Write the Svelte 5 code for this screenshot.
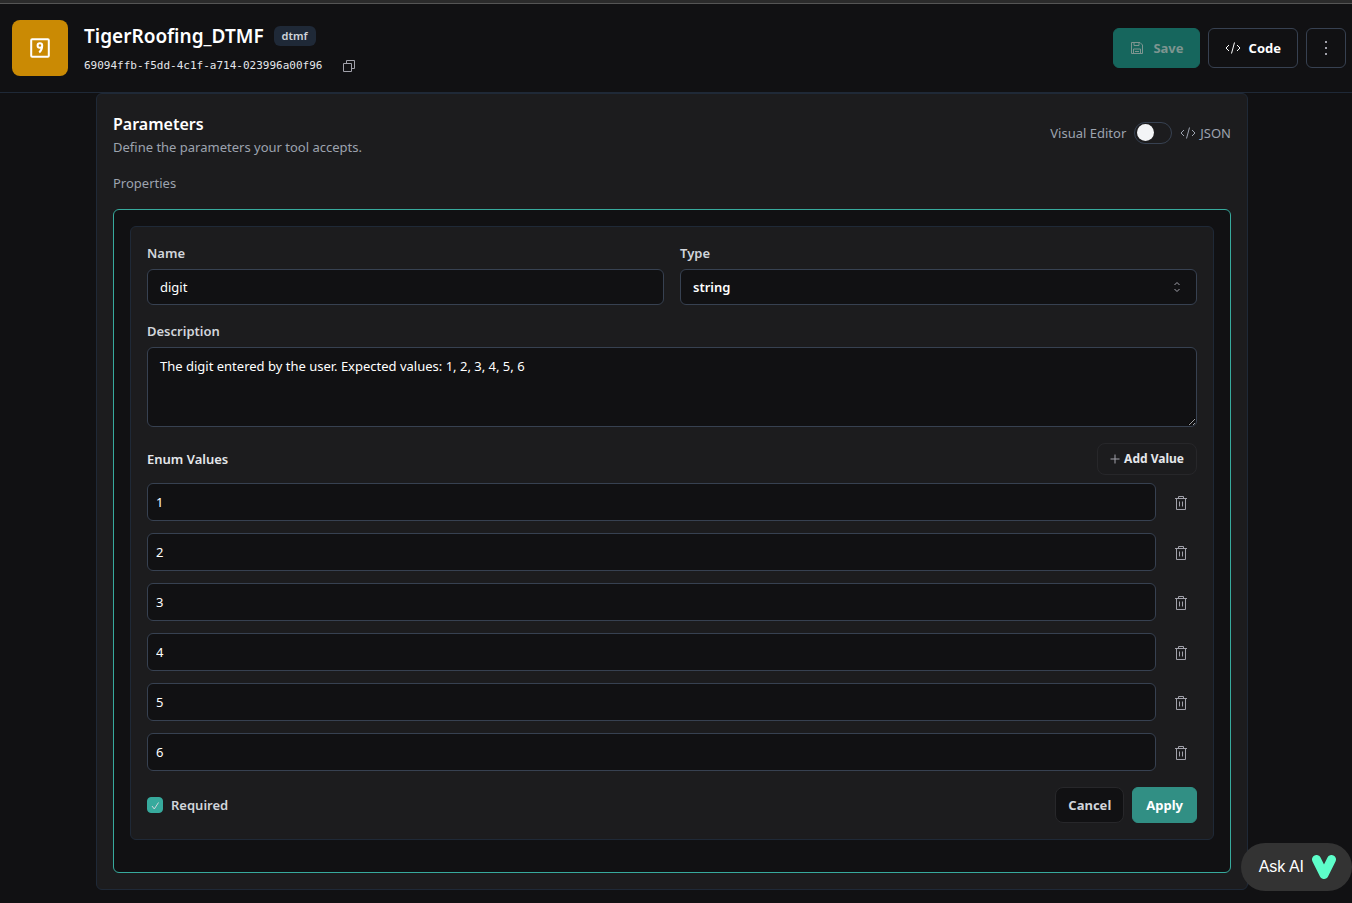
<script lang="ts">
  /** ToolEditor: header bar plus the parameter schema editor for a single tool. */

  let jsonMode = $state(false);
  let name = $state('digit');
  let type = $state('string');
  let description = $state('The digit entered by the user. Expected values: 1, 2, 3, 4, 5, 6');
  let values = $state(['1', '2', '3', '4', '5', '6']);
  let required = $state(true);

  function addValue() { values.push(''); }
  function removeValue(i: number) { values.splice(i, 1); }
</script>

{#snippet codeIcon()}
  <svg class="icon" viewBox="0 0 16 16" aria-hidden="true">
    <path d="M4 5 1 8l3 3M12 5l3 3-3 3M9.500 2.500l-3 11" />
  </svg>
{/snippet}

<div class="page">
  <header class="topbar">
    <div class="tool-icon">
      <svg viewBox="0 0 20 20" aria-hidden="true">
        <rect x="1.200" y="1.200" width="17.600" height="17.600" rx="1" />
        <path d="M12.200 7.500a2.300 2.300 0 1 1-4.600 0 2.300 2.300 0 0 1 4.600 0c0 3-.7 5-3 7" />
      </svg>
    </div>
    <div class="tool-info">
      <div class="title-row">
        <h1>TigerRoofing_DTMF</h1>
        <span class="badge">dtmf</span>
      </div>
      <div class="id-row">
        <span class="tool-id">69094ffb-f5dd-4c1f-a714-023996a00f96</span>
        <button class="copy" aria-label="Copy ID">
          <svg viewBox="0 0 12 12" aria-hidden="true">
            <path d="M3.500 3.500v-3h8v8h-3M.5 3.500h8v8h-8z" />
          </svg>
        </button>
      </div>
    </div>
    <div class="actions">
      <button class="btn save" disabled>
        <svg class="icon" viewBox="0 0 16 16" aria-hidden="true">
          <path d="M2.500 2.500h8.500l2.500 2.500v8.500h-11zM5 2.500v3h5v-3M4.500 13.500V9h7v4.500M6 11.500h4" />
        </svg>
        Save
      </button>
      <button class="btn outline">{@render codeIcon()} Code</button>
      <button class="btn outline more" aria-label="More actions">
        <svg viewBox="0 0 2 16" aria-hidden="true">
          <path d="M0 1h2v2H0zM0 7h2v2H0zM0 13h2v2H0z" />
        </svg>
      </button>
    </div>
  </header>

  <main>
    <section class="card">
      <div class="card-head">
        <div>
          <h2>Parameters</h2>
          <p>Define the parameters your tool accepts.</p>
        </div>
        <label class="mode">
          Visual Editor
          <input type="checkbox" role="switch" bind:checked={jsonMode} />
          <span class="mode-json">{@render codeIcon()} JSON</span>
        </label>
      </div>

      <p class="properties">Properties</p>

      <div class="selected">
        <form class="property" onsubmit={(e) => e.preventDefault()}>
          <div class="columns">
            <div class="field">
              <label for="prop-name">Name</label>
              <input id="prop-name" type="text" bind:value={name} />
            </div>
            <div class="field">
              <label for="prop-type">Type</label>
              <div class="select">
                <select id="prop-type" bind:value={type}>
                  <option>string</option>
                  <option>number</option>
                  <option>boolean</option>
                </select>
                <svg viewBox="0 0 8 12" aria-hidden="true">
                  <path d="M1.500 4 4 1.500 6.500 4M1.500 8 4 10.500 6.500 8" />
                </svg>
              </div>
            </div>
          </div>

          <div class="field">
            <label for="prop-desc">Description</label>
            <textarea id="prop-desc" class="description" bind:value={description}></textarea>
          </div>

          <div class="enum">
            <div class="enum-head">
              <h3>Enum Values</h3>
              <button type="button" class="add" onclick={addValue}>
                <svg viewBox="0 0 10 10" aria-hidden="true"><path d="M5 .5v9M.5 5h9" /></svg>
                Add Value
              </button>
            </div>
            {#each values as _, i}
              <div class="enum-row">
                <input type="text" aria-label={`Enum value ${i + 1}`} bind:value={values[i]} />
                <button type="button" class="trash" aria-label="Remove value" onclick={() => removeValue(i)}>
                  <svg viewBox="0 0 12 14" aria-hidden="true">
                    <path d="M0 2.500h12M3.500 2.500v-2h5v2M1.500 2.500v11h9v-11M4.500 5.500v5M7.500 5.500v5" />
                  </svg>
                </button>
              </div>
            {/each}
          </div>

          <div class="footer">
            <label class="required">
              <input type="checkbox" bind:checked={required} />
              <svg viewBox="0 0 16 16" aria-hidden="true"><path d="m5 9 2.300 3L11.500 5.500" /></svg>
              Required
            </label>
            <div class="footer-actions">
              <button type="button" class="cancel">Cancel</button>
              <button type="submit" class="apply">Apply</button>
            </div>
          </div>
        </form>
      </div>
    </section>
  </main>

  <button class="ask">
    Ask AI
    <svg viewBox="0 0 24 24" aria-hidden="true"><path d="M4.500 4.500 12 19.500l7.500-15" /></svg>
  </button>
</div>

<style>
  :global(body) {
    background: #111113;
  }

  .page {
    min-height: 100vh;
    box-sizing: border-box;
    border-top: 3px solid #2b2b2b;
    font-family: 'Segoe UI', 'Noto Sans', sans-serif;
    font-size: 13px;
    line-height: 20px;
    color: #fff;
  }

  .page :is(input, select, textarea, button) {
    box-sizing: border-box;
    margin: 0;
    font: inherit;
    color: inherit;
  }

  h1, h2, h3, p { margin: 0; }

  svg {
    display: block;
    flex: none;
    fill: none;
    stroke: currentColor;
  }

  .icon {
    width: 16px;
    height: 16px;
  }

  .topbar {
    display: flex;
    align-items: center;
    gap: 16px;
    height: 88px;
    padding: 0 6px 0 12px;
    border-top: 1px solid #555;
    border-bottom: 1px solid #1f2937;
  }

  .tool-icon {
    display: grid;
    place-items: center;
    width: 56px;
    height: 56px;
    border-radius: 8px;
    background: #ca8a04;
  }

  .tool-icon svg {
    width: 20px;
    height: 20px;
    stroke-width: 2;
  }

  .tool-info {
    flex: 1;
    padding-top: 2px;
  }

  .title-row {
    display: flex;
    align-items: center;
    gap: 10px;
    margin-bottom: 6px;
  }

  h1 {
    font-size: 19px;
    line-height: 28px;
    font-weight: 600;
  }

  .badge {
    padding: 0 8px;
    border-radius: 6px;
    background: #1f2937;
    color: #d1d5db;
    font-size: 11px;
    font-weight: 600;
  }

  .id-row {
    display: flex;
    align-items: center;
    gap: 11px;
    color: #e5e7eb;
    font-family: 'DejaVu Sans Mono', monospace;
    font-size: 11px;
    line-height: 20px;
  }

  .tool-id {
    min-width: 248px;
  }

  .copy {
    padding: 0;
    border: 0;
    background: none;
  }

  .copy svg {
    width: 12px;
    height: 12px;
    stroke: #a1a1aa;
  }

  .actions {
    display: flex;
    gap: 8px;
  }

  .page .btn {
    display: flex;
    align-items: center;
    justify-content: center;
    gap: 8px;
    height: 40px;
    padding: 0 16px;
    border: 1px solid #374151;
    border-radius: 6px;
    background: none;
    font-weight: 700;
  }

  .page .save {
    padding: 0 15px;
    border-color: #16665d;
    background: #16665d;
    color: #7d9590;
  }

  .page .more {
    width: 40px;
    padding: 0;
    color: #a1a1aa;
  }

  .more svg {
    width: 2px;
    height: 16px;
    fill: currentColor;
    stroke: none;
  }

  main {
    padding: 0 104px 13px 96px;
  }

  .card {
    max-width: 1152px;
    box-sizing: border-box;
    margin: 0 auto;
    padding: 18px 16px 16px;
    border: 1px solid #1f2937;
    border-radius: 6px;
    background: #1c1c1e;
  }

  .card-head {
    display: flex;
    align-items: center;
    justify-content: space-between;
    color: #9ca3af;
  }

  h2 {
    margin-bottom: 1px;
    color: #fff;
    font-size: 16px;
    line-height: 24px;
    font-weight: 600;
  }

  .mode, .mode-json {
    display: flex;
    align-items: center;
  }

  .mode {
    gap: 8px;
    margin-bottom: 4px;
  }

  .mode-json { gap: 4px; }

  .mode input {
    appearance: none;
    display: flex;
    align-items: center;
    width: 38px;
    height: 22px;
    padding: 0 2px;
    border: 1px solid #374151;
    border-radius: 12px;
  }

  .mode input::before {
    content: '';
    width: 17px;
    height: 17px;
    border-radius: 50%;
    background: #f3f4f6;
  }

  .mode input:checked {
    justify-content: flex-end;
  }

  .properties {
    margin: 16px 0;
    color: #9ca3af;
  }

  .selected {
    padding: 16px 16px 32px;
    border: 1px solid #37aa9d;
    border-radius: 6px;
    background: #111113;
  }

  .property {
    display: flex;
    flex-direction: column;
    gap: 16px;
    padding: 16px;
    border: 1px solid #1f2937;
    border-radius: 6px;
    background: #1c1c1e;
  }

  .columns {
    display: grid;
    grid-template-columns: 1fr 1fr;
    gap: 16px;
  }

  .field {
    display: flex;
    flex-direction: column;
    gap: 6px;
  }

  .field label, .required {
    color: #d1d5db;
    font-weight: 600;
  }

  .page :is(input[type='text'], select, textarea) {
    width: 100%;
    height: 36px;
    padding: 0 12px;
    border: 1px solid #374151;
    border-radius: 6px;
    outline: none;
    background: #111113;
  }

  .page textarea.description {
    height: 80px;
    padding: 8px 12px;
    resize: vertical;
  }

  .select {
    position: relative;
  }

  .page select {
    appearance: none;
    font-weight: 600;
  }

  .select svg {
    position: absolute;
    top: 12px;
    right: 16px;
    width: 8px;
    height: 12px;
    stroke: #a1a1aa;
    pointer-events: none;
  }

  .enum {
    display: flex;
    flex-direction: column;
    gap: 12px;
  }

  .enum-head {
    display: flex;
    align-items: center;
    justify-content: space-between;
    margin-bottom: -4px;
  }

  h3 {
    color: #e5e7eb;
    font-size: 13px;
    font-weight: 600;
  }

  .page .add {
    display: flex;
    align-items: center;
    gap: 4px;
    height: 32px;
    padding: 0 12px;
    border: 1px solid #27272a;
    border-radius: 8px;
    background: none;
    color: #e5e7eb;
    font-size: 12px;
    font-weight: 700;
  }

  .add svg {
    width: 10px;
    height: 10px;
    stroke: #a1a1aa;
  }

  .enum-row {
    display: flex;
    align-items: center;
    gap: 8px;
  }

  .page .enum-row input {
    height: 38px;
    padding: 0 8px;
  }

  .page .trash {
    display: grid;
    place-items: center;
    width: 34px;
    height: 34px;
    padding: 2px 0 0;
    border: 0;
    background: none;
    color: #a1a1aa;
  }

  .trash svg {
    width: 12px;
    height: 14px;
  }

  .footer, .footer-actions, .required {
    display: flex;
    align-items: center;
    gap: 8px;
  }

  .footer {
    justify-content: space-between;
  }

  .required {
    position: relative;
  }

  .required input {
    appearance: none;
    width: 16px;
    height: 16px;
    border: 1px solid #37aa9d;
    border-radius: 4px;
  }

  .required input:checked {
    background: #37aa9d;
  }

  .required svg {
    position: absolute;
    left: 0;
    width: 16px;
    height: 16px;
    pointer-events: none;
  }

  .required input:not(:checked) + svg {
    display: none;
  }

  .footer-actions button {
    height: 36px;
    padding: 0 12px;
    border: 1px solid #27272a;
    border-radius: 8px;
    background: #111113;
    color: #d1d5db;
    font-weight: 700;
  }

  .page .apply {
    padding: 0 13px;
    border-color: #318f84;
    border-radius: 6px;
    background: #318f84;
    color: #fff;
  }

  .page .ask {
    position: fixed;
    right: 0;
    bottom: 12px;
    display: flex;
    align-items: center;
    gap: 8px;
    height: 48px;
    padding: 0 16px 0 18px;
    border: 0;
    border-radius: 24px;
    background: #333;
    font-family: 'Liberation Sans', Arial, sans-serif;
    font-size: 16px;
  }

  .ask svg {
    width: 24px;
    height: 24px;
    stroke: #5dfeca;
    stroke-width: 9;
    stroke-linecap: round;
    stroke-linejoin: round;
  }
</style>
